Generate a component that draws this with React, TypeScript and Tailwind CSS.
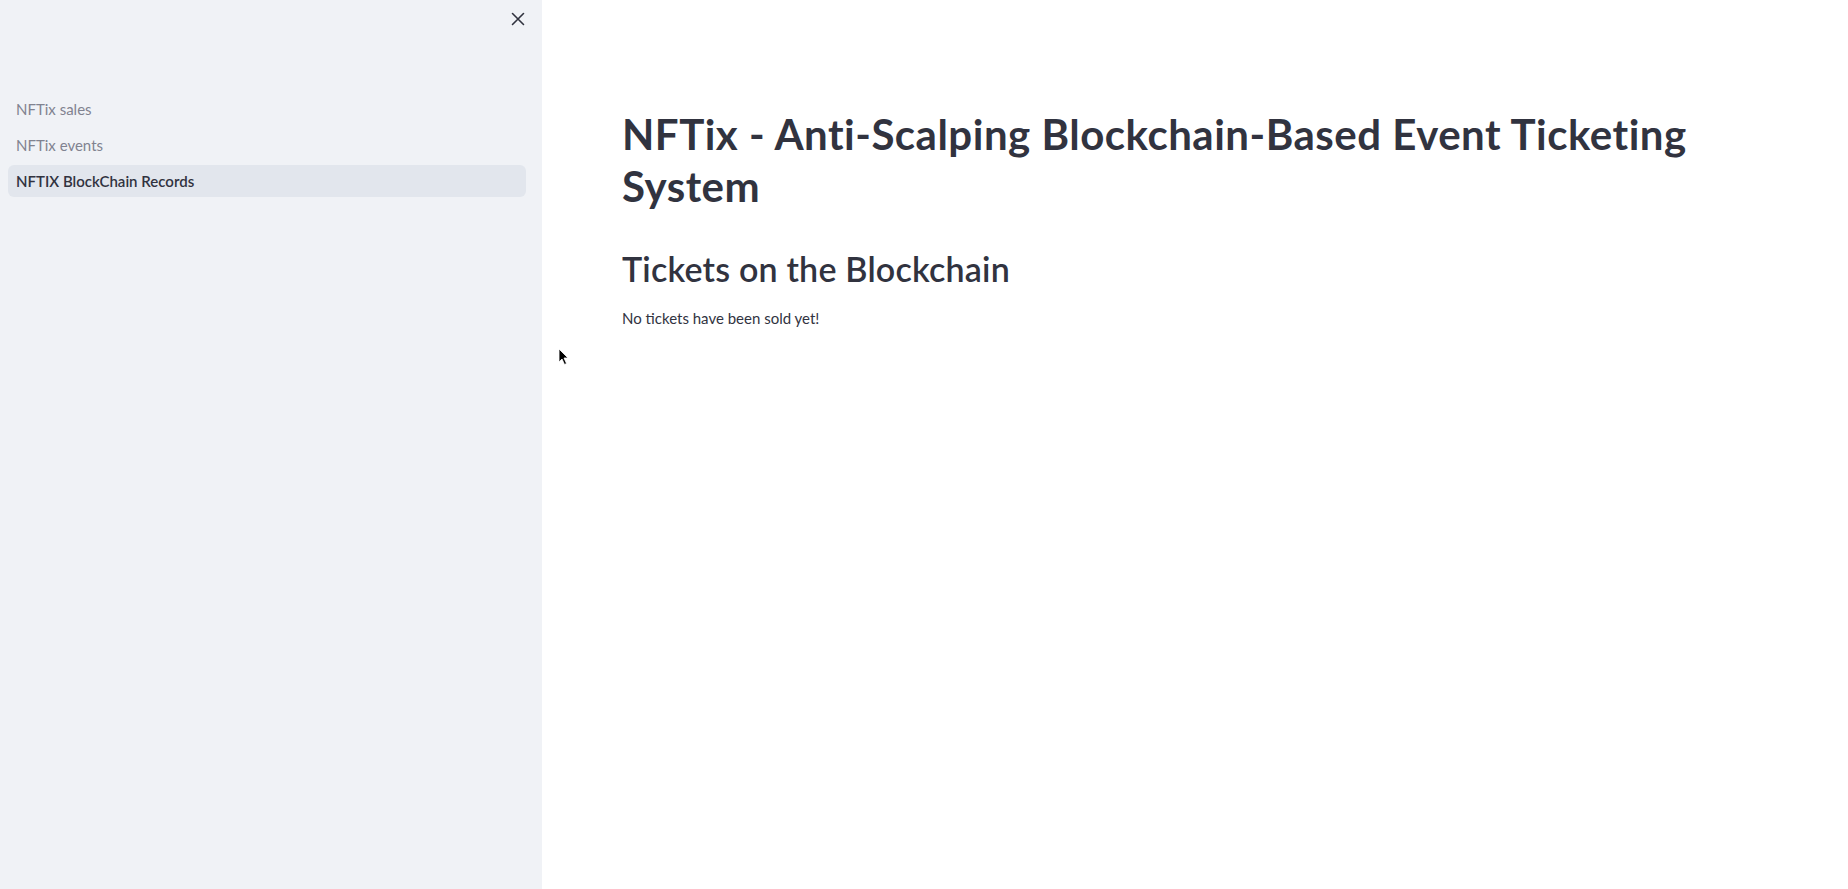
import React from 'react';

const pages = [
  { label: 'NFTix sales', active: false },
  { label: 'NFTix events', active: false },
  { label: 'NFTIX BlockChain Records', active: true },
];

const CloseIcon = () => (
  <svg width="14" height="14" viewBox="0 0 14 14" fill="none" stroke="#31333F" strokeWidth="1.6" strokeLinecap="round">
    <path d="M1.5 1.5 L12.5 12.5 M12.5 1.5 L1.5 12.5" />
  </svg>
);

// mouse pointer captured in the screenshot
const Cursor = () => (
  <svg width="12" height="18" viewBox="0 0 12 18" className="absolute left-[16px] top-[348px]">
    <path d="M1 1 L1 14 L4 11 L6.5 16.5 L8.5 15.5 L6 10 L10 10 Z" fill="#000" stroke="#fff" strokeWidth="0.8" />
  </svg>
);

export default function App() {
  return (
    <div className="flex h-screen w-full bg-white text-[#31333F] font-['Lato',sans-serif]">
      {/* Sidebar */}
      <aside className="relative w-[542px] shrink-0 bg-[#F0F2F6]">
        <button className="absolute left-[511px] top-[12px] flex h-[14px] w-[14px] items-center justify-center">
          <CloseIcon />
        </button>
        <nav className="flex flex-col gap-1 pl-2 pr-4 pt-[93px]">
          {pages.map((p) => (
            <div
              key={p.label}
              className={
                p.active
                  ? 'h-8 rounded-md bg-[#E2E6ED] px-2 py-1 text-[15px] leading-6 font-semibold text-[#31333F]'
                  : 'h-8 rounded-md px-2 py-1 text-[15px] leading-6 text-[#818390]'
              }
            >
              {p.label}
            </div>
          ))}
        </nav>
      </aside>

      {/* Main */}
      <main className="relative flex-1">
        <Cursor />
        <div className="flex flex-col pl-20 pr-20 pt-[108px]">
          <h1 className="max-w-[1130px] text-[42px] leading-[52px] font-bold tracking-[0.5px]">
            NFTix - Anti-Scalping Blockchain-Based Event Ticketing System
          </h1>
          <h2 className="mt-9 text-[34px] leading-[41px] font-semibold tracking-[0.2px]">Tickets on the Blockchain</h2>
          <p className="mt-[17px] text-[15px] leading-6">No tickets have been sold yet!</p>
        </div>
      </main>
    </div>
  );
}
